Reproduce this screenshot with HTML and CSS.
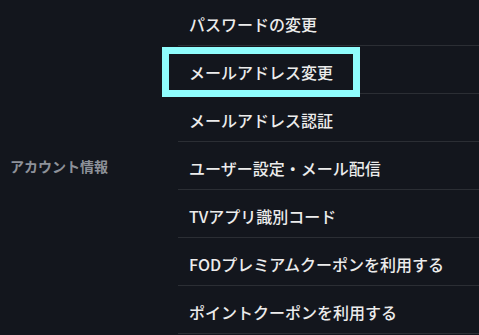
FILE: index.html
```html
<!DOCTYPE html>
<html lang="ja">
<head>
<meta charset="utf-8">
<title>アカウント情報</title>
<link rel="stylesheet" href="styles.css">
</head>
<body>
<section class="group">
  <h2 class="group-title">アカウント情報</h2>
  <ul class="menu">
    <li class="menu-item"><a class="menu-link" href="#">パスワードの変更</a></li>
    <li class="menu-item"><a class="menu-link is-focused" href="#">メールアドレス変更</a></li>
    <li class="menu-item"><a class="menu-link" href="#">メールアドレス認証</a></li>
    <li class="menu-item"><a class="menu-link" href="#">ユーザー設定・メール配信</a></li>
    <li class="menu-item"><a class="menu-link" href="#">TVアプリ識別コード</a></li>
    <li class="menu-item"><a class="menu-link" href="#">FODプレミアムクーポンを利用する</a></li>
    <li class="menu-item"><a class="menu-link" href="#">ポイントクーポンを利用する</a></li>
  </ul>
</section>
</body>
</html>
```
FILE: styles.css
```css
html, body {
  margin: 0;
  padding: 0;
  background: #13161d;
}
body {
  font-family: "Noto Sans CJK JP", "Noto Sans", sans-serif;
  color: #e8e8e8;
  overflow: hidden;
}
.group {
  display: flex;
  align-items: center;
  margin-top: -2px;
}
.group-title {
  width: 168px;
  flex: none;
  margin: 0;
  padding-left: 10px;
  font-size: 14px;
  font-weight: 700;
  color: #8e929a;
  line-height: 20px;
}
.menu {
  flex: 1;
  list-style: none;
  margin: 0;
  padding: 0;
}
.menu-item {
  border-bottom: 1px solid #2b2e34;
  padding: 8px 0 3px;
  height: 36px;
}
.menu-link {
  display: inline-block;
  margin-left: -9px;
  padding: 6px 20px;
  font-size: 16px;
  font-weight: 500;
  line-height: 24px;
  color: #ececec;
  text-decoration: none;
}
.menu-link.is-focused {
  outline: 7px solid #8ffcfc;
}
```
